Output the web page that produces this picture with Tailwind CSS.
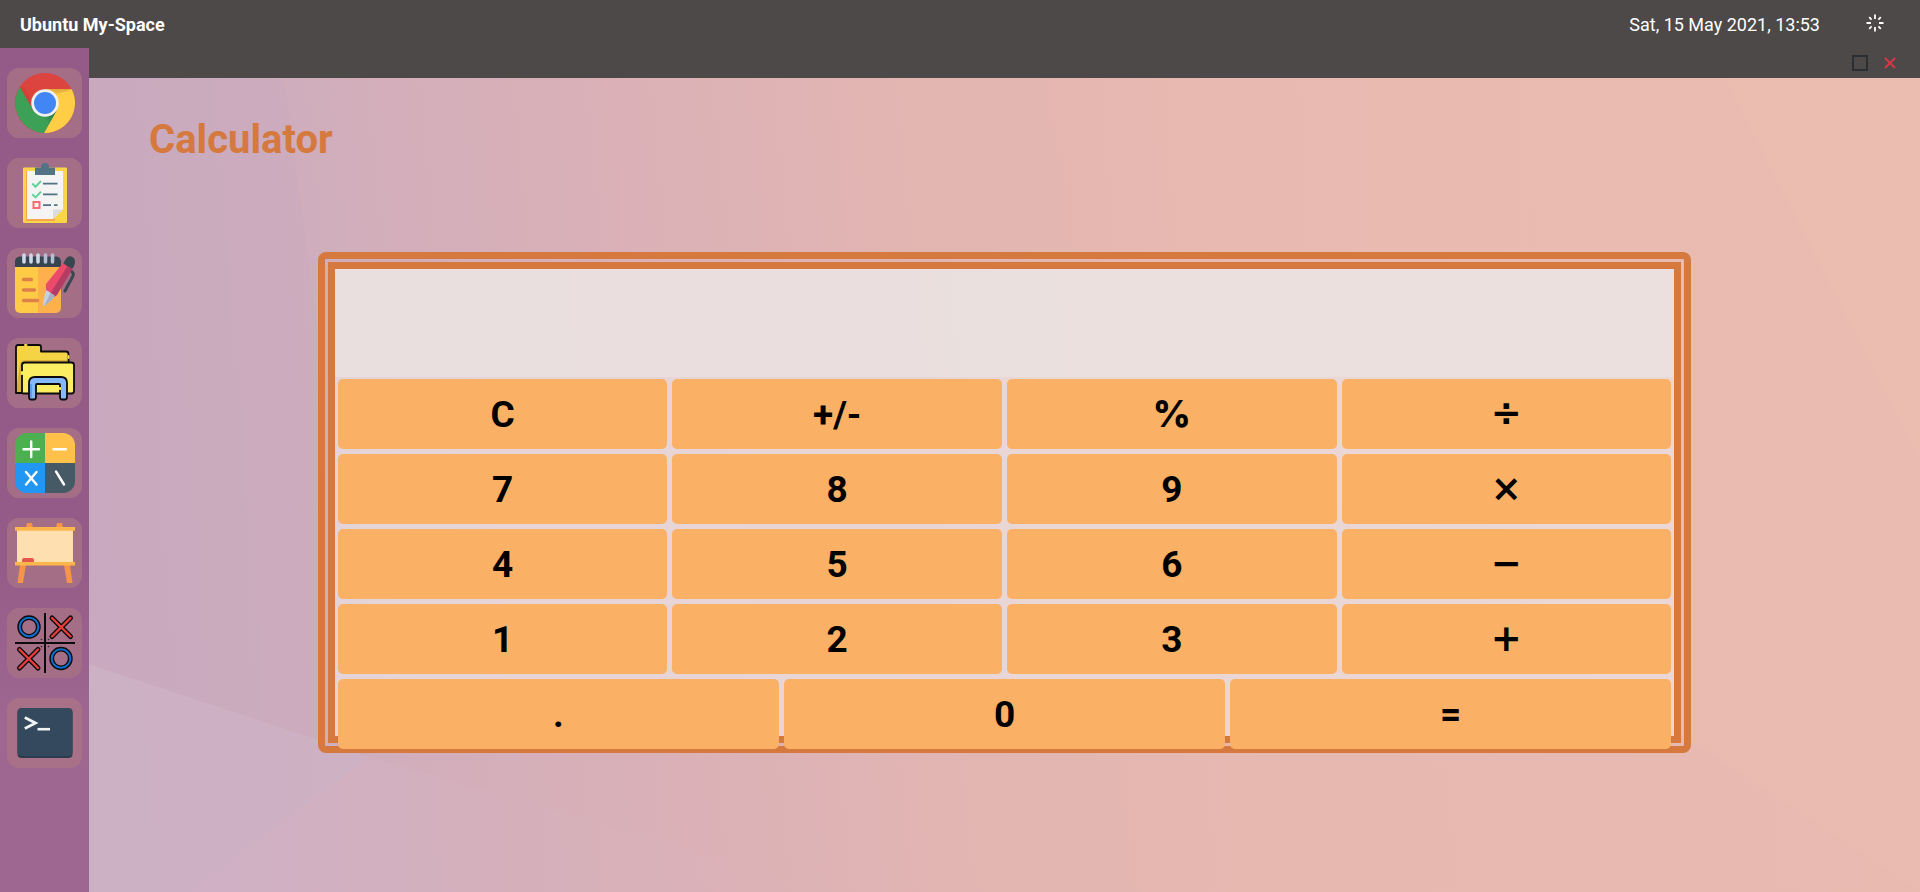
<!DOCTYPE html>
<html lang="en">
<head>
<meta charset="utf-8">
<title>Ubuntu My-Space</title>
<script src="https://cdn.jsdelivr.net/npm/@tailwindcss/browser@4"></script>
</head>
<body class="relative isolate flex min-h-screen flex-col overflow-x-hidden bg-[#e0b3b3] font-[Roboto,sans-serif]">

<!-- wallpaper -->
<svg class="absolute inset-0 -z-10 size-full" viewBox="0 0 1920 892" preserveAspectRatio="none" aria-hidden="true">
  <defs>
    <linearGradient id="wall" gradientUnits="userSpaceOnUse" x1="89" y1="400" x2="1920" y2="220">
      <stop offset="0" stop-color="#c9aabe"/>
      <stop offset=".12" stop-color="#cfadbc"/>
      <stop offset=".3" stop-color="#dbb1b7"/>
      <stop offset=".45" stop-color="#e2b5b2"/>
      <stop offset=".6" stop-color="#e7b8b0"/>
      <stop offset="1" stop-color="#e9bab0"/>
    </linearGradient>
    <linearGradient id="fa" x1="0" y1="0" x2="1" y2="0">
      <stop offset="0" stop-color="#cfb0c6" stop-opacity=".9"/>
      <stop offset=".4" stop-color="#d4b1be" stop-opacity=".6"/>
      <stop offset="1" stop-color="#dcb4b8" stop-opacity="0"/>
    </linearGradient>
    <linearGradient id="fb" x1="0" y1="0" x2="1" y2="0">
      <stop offset="0" stop-color="#ebbdb0" stop-opacity="0"/>
      <stop offset=".4" stop-color="#ecbeb1" stop-opacity=".6"/>
      <stop offset="1" stop-color="#ecbfb2" stop-opacity=".6"/>
    </linearGradient>
    <linearGradient id="fc" x1="0" y1="0" x2="1" y2="0">
      <stop offset="0" stop-color="#c7a8c0" stop-opacity=".8"/>
      <stop offset="1" stop-color="#c8a9be" stop-opacity=".6"/>
    </linearGradient>
  </defs>
  <rect width="1920" height="892" fill="url(#wall)"/>
  <path d="M89 78H284L318 330V740L89 664Z" fill="url(#fc)" opacity=".6"/>
  <path d="M89 664 370 757 190 892H89Z" fill="#cdb1c4" opacity=".8"/>
  <path d="M370 757 840 892H190Z" fill="url(#fa)"/>
  <path d="M1030 78H1725L1920 460V892L1180 400Z" fill="url(#fb)" opacity=".5"/>
  <path d="M1725 78H1920V460Z" fill="#ecbfb2" opacity=".6"/>
</svg>

<header class="flex h-12 items-center justify-between bg-[#4d4949] px-5 pt-0.5 text-lg text-white">
  <span class="font-bold">Ubuntu My-Space</span>
  <div class="flex items-center gap-[46px]">
    <time datetime="2021-05-15T13:53">Sat, 15 May 2021, 13:53</time>
    <svg class="mr-4 mb-1 size-[18px]" viewBox="0 0 18 18" fill="none" stroke="#fff" stroke-width="1.800" aria-hidden="true">
      <path d="M9 .5v4.500M9 13v4.500M.5 9H5M13 9h4.500M3.200 3.200 5.600 5.600M12.400 12.400l2.400 2.400M14.800 3.200l-2.400 2.400M5.600 12.400l-2.400 2.400"/>
    </svg>
  </div>
</header>

<div class="flex grow">
  <nav aria-label="Dock" class="flex w-[89px] shrink-0 flex-col items-center gap-5 bg-linear-to-b from-[#955b88] from-60% to-[#9d6792] to-80% pt-5">
    <button aria-label="Chrome" class="flex h-[70px] w-[75px] items-center justify-center rounded-xl bg-[#a46e86]">
      <svg class="size-[60px]" viewBox="0 0 60 60">
        <defs>
          <linearGradient id="cr" x1="10" y1="30" x2="17" y2="26" gradientUnits="userSpaceOnUse"><stop stop-color="#b5322b"/><stop offset="1" stop-color="#db4437"/></linearGradient>
          <linearGradient id="cy" x1="0" y1="16" x2="0" y2="23" gradientUnits="userSpaceOnUse"><stop stop-color="#dda73a"/><stop offset="1" stop-color="#ffcd46"/></linearGradient>
          <linearGradient id="cg" x1="40" y1="42" x2="32" y2="50" gradientUnits="userSpaceOnUse"><stop stop-color="#1f7444"/><stop offset="1" stop-color="#3ca056"/></linearGradient>
        </defs>
        <circle cx="30" cy="30" r="30" fill="#dc4440"/>
        <path d="M5 13.5 18 37 24 18Z" fill="url(#cr)" opacity=".7"/>
        <path d="M30 16.3H56.7A30 30 0 0 1 29 60L42 36Z" fill="#ffcd46"/>
        <path d="M30 16.3H56.7L40 22Z" fill="url(#cy)"/>
        <path d="M5 14A30 30 0 0 0 29 60L41.9 37 18 37Z" fill="#3ca056"/>
        <path d="M41.9 37 34 51 28 44Z" fill="url(#cg)" opacity=".8"/>
        <circle cx="30" cy="30" r="13.8" fill="#f1f1f1"/><circle cx="30" cy="30" r="11" fill="#4285f4"/>
      </svg>
    </button>
    <button aria-label="To-do list" class="flex h-[70px] w-[75px] items-center justify-center rounded-xl bg-[#a46e86]">
      <svg class="size-[60px]" viewBox="0 0 60 60" fill="none">
        <rect x="8" y="4.500" width="44" height="55.500" rx="1.200" fill="#f9d548"/>
        <path d="M11 8h29v50H11z" fill="#ffa550"/>
        <path d="M12 8h36v38.500L38 56H12z" fill="#f4f4f4"/><path d="M38 56V46.500h10z" fill="#dcdcdc"/>
        <path d="M20 4.500h20v7.500H20z" fill="#527286"/><circle cx="30" cy="4" r="4" fill="#527286"/>
        <path d="m17.300 20.500 3.200 3.200 5.500-5.700M17.300 31.200l3.200 3.200 5.500-5.700" stroke="#62d49b" stroke-width="2"/>
        <rect x="18.500" y="39" width="6" height="6" stroke="#fb6a70" stroke-width="2"/>
        <path d="M28 20.700h14.500M28 31.300h14.500M28 42.200h8M39 42.200h3.500" stroke="#527286" stroke-width="1.800"/>
      </svg>
    </button>
    <button aria-label="Notes" class="flex h-[70px] w-[75px] items-center justify-center rounded-xl bg-[#a46e86]">
      <svg class="size-[60px]" viewBox="0 0 60 60" fill="none" stroke-linecap="round">
        <path d="M0 14H23V60H5a5 5 0 0 1-5-5z" fill="#ffcb47"/><path d="M23 14H46V55a5 5 0 0 1-5 5H23z" fill="#fdb04b"/>
        <path d="M5 3.500H41a5 5 0 0 1 5 5V14H0V8.500a5 5 0 0 1 5-5z" fill="#36454f"/>
        <path d="M9 2v7M16 2v7M23 2v7" stroke="#cfd8e6" stroke-width="3.600"/><path d="M30.500 2v7M37.500 2v7" stroke="#b5bdd2" stroke-width="3.600"/>
        <path d="M8.500 26.500h8M8.500 37h11M8.500 47.500h14" stroke="#de8149" stroke-width="3.400"/>
        <path d="M56 18q4 2 1 7T50 38" stroke="#384750" stroke-width="3"/>
        <path d="M49 9c3-6 6-6.500 8.500-5s3.500 5 1 10l-2 3-9-5z" fill="#384750"/>
        <path d="M48 10 56 16 41 42 38 44 31 38V31Z" fill="#eb4a6b"/><path d="m52.500 13 5 3L42 42l-3 2-4-3Z" fill="#b43b62"/>
        <path d="m31.500 37 8 5.500Q38 47 29 53l-1-1Q29 42 31.500 37z" fill="#c6d0e2"/><path d="m35.500 40 4 2.500Q38 47 29 53z" fill="#a6afc6"/>
      </svg>
    </button>
    <button aria-label="Files" class="flex h-[70px] w-[75px] items-center justify-center rounded-xl bg-[#a46e86]">
      <svg class="size-[60px]" viewBox="0 0 60 60" fill="none" stroke="#0b0b0b" stroke-width="1.800" stroke-linejoin="round" stroke-linecap="round">
        <path d="M1 50V4.500Q1 2 3 2H24Q26 2 26 4V8.500H51Q53.500 8.500 53.500 11V50H3Q1 50 1 50z" fill="#f4d444"/>
        <path d="M2 40V49H7V22Q7 19.500 10 19.500H52V17H10Q5 17 5 22z" fill="#d9b03b" stroke="none"/>
        <path d="M7 50V22Q7 19.500 10 19.500H56.500Q59 19.500 59 22V48Q59 50.500 56.500 50.500H9Q7 50.500 7 50z" fill="#fbee62"/>
        <path d="M14 54V40Q14 34 20 34H46Q52 34 52 40V54Q52 56.500 50 56.500H47Q45 56.500 45 54V42Q45 41 44 41H22Q21 41 21 42V54Q21 56.500 19 56.500H16Q14 56.500 14 54z" fill="#86b9fb"/>
        <path d="M16 54V42" stroke="#5d97ee"/><path d="M10 1.900h1.500M53.500 13v2" stroke="#f4d444" stroke-width="2"/><path d="M7 29v2M45 45v1" stroke="#fbee62" stroke-width="2.200"/>
      </svg>
    </button>
    <button aria-label="Calculator" class="flex h-[70px] w-[75px] items-center justify-center rounded-xl bg-[#a46e86]">
      <svg class="size-[60px]" viewBox="0 0 60 60" fill="none" stroke-linecap="round">
        <path d="M12 0H30V30H0V12A12 12 0 0 1 12 0z" fill="#4caf50"/><path d="M30 0H48A12 12 0 0 1 60 12V30H30z" fill="#ffc14a"/>
        <path d="M0 30H30V60H12A12 12 0 0 1 0 48z" fill="#2196f3"/><path d="M30 30H60V48A12 12 0 0 1 48 60H30z" fill="#455a64"/>
        <path d="M8.500 16.200h15.500M16.200 8.500V24M38.500 16.200h12.500M11 39l10.500 12.500M21.500 39 11 51.500M41 38.500l8 13" stroke="#fff" stroke-width="2.400"/>
      </svg>
    </button>
    <button aria-label="Whiteboard" class="flex h-[70px] w-[75px] items-center justify-center rounded-xl bg-[#a46e86]">
      <svg class="size-[60px]" viewBox="0 0 60 60">
        <path d="M12 0h5l1 5h-7zM42 0h5l1 5h-7zM5 42h6L8 60H2.500zM49 42h6l2.500 18H52z" fill="#f79448"/>
        <path d="M2 6h56v34H2z" fill="#fddfb0"/><path d="M0 4h60v3.800H0zM0 39h60v3.500H0z" fill="#fdb64c"/>
        <path d="M7 39v-2.500Q7 35 9 35h8q2 0 2 1.500V39z" fill="#e4574c"/>
      </svg>
    </button>
    <button aria-label="Tic-tac-toe" class="flex h-[70px] w-[75px] items-center justify-center rounded-xl bg-[#a46e86]">
      <svg class="size-[60px]" viewBox="0 0 60 60" fill="none" stroke-linecap="round">
        <path d="M30 0v60M0 30h60" stroke="#0b0b0b" stroke-width="2" stroke-linecap="butt"/>
        <g stroke="#0b0b0b"><circle cx="14" cy="14" r="9.300" stroke-width="4.800"/><circle cx="46" cy="45.500" r="9.300" stroke-width="4.800"/>
        <path d="m37 5 18.500 18.500M55.500 5 37 23.500M4.500 36.500 23 55M23 36.500 4.500 55" stroke-width="5"/></g>
        <g stroke="#0c6fd0" stroke-width="2"><circle cx="14" cy="14" r="9.300"/><circle cx="46" cy="45.500" r="9.300"/></g>
        <path d="m37 5 18.500 18.500M55.500 5 37 23.500M4.500 36.500 23 55M23 36.500 4.500 55" stroke="#ec3b3b" stroke-width="2.400"/>
        <path d="M26.500 26.500h0M33.500 26.500h0M26.500 33.500h0M33.500 33.500h0" stroke="#222" stroke-width="1.600"/>
      </svg>
    </button>
    <button aria-label="Terminal" class="flex h-[70px] w-[75px] items-center justify-center rounded-xl bg-[#a97187]">
      <svg class="size-[60px]" viewBox="0 0 60 60" fill="none">
        <rect x="2.500" y="6" width="55" height="49" rx="4" fill="#2a3b4c"/><rect x="2.500" y="5" width="55" height="48" rx="4" fill="#34495e"/>
        <path d="M9.800 14.500 20.500 20 9.800 25.500" stroke="#f0f3f4" stroke-width="2.800"/><path d="M22.500 26.200h12.500" stroke="#f0f3f4" stroke-width="2.600"/>
      </svg>
    </button>
  </nav>

  <main class="flex grow flex-col">
    <div class="flex h-[30px] items-center justify-end gap-4 bg-[#4d4949] pr-6">
      <button aria-label="Maximize" class="size-4 border-2 border-[#2b2e33]"></button>
      <button aria-label="Close"><svg class="size-3" viewBox="0 0 12 12" stroke="#dc3545" stroke-width="1.800"><path d="m1 1 10 10M11 1 1 11"/></svg></button>
    </div>
    <h1 class="px-[60px] pt-8 text-[40px] leading-[60px] font-bold text-[#d5793e]">Calculator</h1>

    <section aria-label="Calculator" class="mx-auto mt-[82px] h-[501px] w-3/4 rounded-lg border-[7px] border-[#d5793e] p-[3px]">
      <div class="h-full border-[7px] border-[#d5793e] bg-[#ebe0e2]/75">
        <output aria-label="Result" class="block h-[108px] bg-[#ebe5e2]/65"></output>
        <div class="flex flex-col gap-[5px] px-[3px] pt-0.5 text-[37px] font-bold text-black">
          <div class="grid grid-cols-4 gap-[5px]">
            <button class="h-[70px] rounded-[5px] bg-[#fbb165] pt-0.5">C</button>
            <button class="h-[70px] rounded-[5px] bg-[#fbb165] pt-0.5">+/-</button>
            <button class="h-[70px] rounded-[5px] bg-[#fbb165] font-[Inter,sans-serif] font-extrabold">%</button>
            <button class="h-[70px] rounded-[5px] bg-[#fbb165] font-['DejaVu_Sans',sans-serif]">÷</button>
            <button class="h-[70px] rounded-[5px] bg-[#fbb165] pt-0.5">7</button>
            <button class="h-[70px] rounded-[5px] bg-[#fbb165] pt-0.5">8</button>
            <button class="h-[70px] rounded-[5px] bg-[#fbb165] pt-0.5">9</button>
            <button class="h-[70px] rounded-[5px] bg-[#fbb165] font-['DejaVu_Sans',sans-serif]">×</button>
            <button class="h-[70px] rounded-[5px] bg-[#fbb165] pt-0.5">4</button>
            <button class="h-[70px] rounded-[5px] bg-[#fbb165] pt-0.5">5</button>
            <button class="h-[70px] rounded-[5px] bg-[#fbb165] pt-0.5">6</button>
            <button class="h-[70px] rounded-[5px] bg-[#fbb165] font-['DejaVu_Sans',sans-serif]">−</button>
            <button class="h-[70px] rounded-[5px] bg-[#fbb165] pt-0.5">1</button>
            <button class="h-[70px] rounded-[5px] bg-[#fbb165] pt-0.5">2</button>
            <button class="h-[70px] rounded-[5px] bg-[#fbb165] pt-0.5">3</button>
            <button class="h-[70px] rounded-[5px] bg-[#fbb165] font-['DejaVu_Sans',sans-serif]">+</button>
          </div>
          <div class="grid grid-cols-3 gap-[5px]">
            <button class="h-[70px] rounded-[5px] bg-[#fbb165] pt-0.5">.</button>
            <button class="h-[70px] rounded-[5px] bg-[#fbb165] pt-0.5">0</button>
            <button class="h-[70px] rounded-[5px] bg-[#fbb165] pt-0.5">=</button>
          </div>
        </div>
      </div>
    </section>
  </main>
</div>
</body>
</html>
